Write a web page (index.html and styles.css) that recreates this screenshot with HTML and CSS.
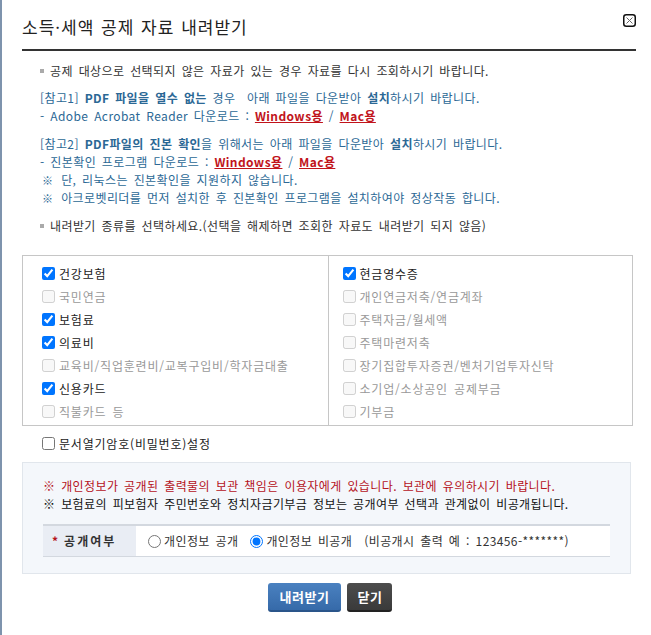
FILE: index.html
```html
<!DOCTYPE html>
<html lang="ko">
<head>
    <meta charset="UTF-8">
    <title>소득·세액 공제 자료 내려받기</title>
    <link rel="stylesheet" href="styles.css">
</head>
<body>
    <div class="popup">
        <div class="popup-header">
            <h1>소득·세액 공제 자료 내려받기</h1>
            <button type="button" class="close-btn" title="닫기">
                <svg width="13" height="13" viewBox="0 0 13 13">
                    <rect x="0.75" y="0.75" width="11.5" height="11.5" rx="2.5" fill="#fff" stroke="#111" stroke-width="1.5"/>
                    <path d="M3.5 3.5 L9.5 9.5 M9.5 3.5 L3.5 9.5" stroke="#666" stroke-width="1"/>
                </svg>
            </button>
        </div>

        <div class="guide">
            <p class="bullet"><span class="sq"></span>공제 대상으로 선택되지 않은 자료가 있는 경우 자료를 다시 조회하시기 바랍니다.</p>

            <div class="note">
                <p>[참고1] <b>PDF 파일을 열수 없는</b> 경우 &nbsp;아래 파일을 다운받아 <b>설치</b>하시기 바랍니다.</p>
                <p>- Adobe Acrobat Reader 다운로드 : <a href="#">Windows용</a> / <a href="#">Mac용</a></p>
            </div>

            <div class="note">
                <p>[참고2] <b>PDF파일의 진본 확인</b>을 위해서는 아래 파일을 다운받아 <b>설치</b>하시기 바랍니다.</p>
                <p>- 진본확인 프로그램 다운로드 : <a href="#">Windows용</a> / <a href="#">Mac용</a></p>
                <p><span class="mark">※</span> 단, 리눅스는 진본확인을 지원하지 않습니다.</p>
                <p><span class="mark">※</span> 아크로벳리더를 먼저 설치한 후 진본확인 프로그램을 설치하여야 정상작동 합니다.</p>
            </div>

            <p class="bullet"><span class="sq"></span>내려받기 종류를 선택하세요.(선택을 해제하면 조회한 자료도 내려받기 되지 않음)</p>
        </div>

        <div class="type-box">
            <div class="type-col">
                <label class="chk"><input type="checkbox" checked>건강보험</label>
                <label class="chk off"><input type="checkbox" disabled>국민연금</label>
                <label class="chk"><input type="checkbox" checked>보험료</label>
                <label class="chk"><input type="checkbox" checked>의료비</label>
                <label class="chk off"><input type="checkbox" disabled>교육비/직업훈련비/교복구입비/학자금대출</label>
                <label class="chk"><input type="checkbox" checked>신용카드</label>
                <label class="chk off"><input type="checkbox" disabled>직불카드 등</label>
            </div>
            <div class="type-col">
                <label class="chk"><input type="checkbox" checked>현금영수증</label>
                <label class="chk off"><input type="checkbox" disabled>개인연금저축/연금계좌</label>
                <label class="chk off"><input type="checkbox" disabled>주택자금/월세액</label>
                <label class="chk off"><input type="checkbox" disabled>주택마련저축</label>
                <label class="chk off"><input type="checkbox" disabled>장기집합투자증권/벤처기업투자신탁</label>
                <label class="chk off"><input type="checkbox" disabled>소기업/소상공인 공제부금</label>
                <label class="chk off"><input type="checkbox" disabled>기부금</label>
            </div>
        </div>

        <label class="chk pw"><input type="checkbox">문서열기암호(비밀번호)설정</label>

        <div class="privacy">
            <p class="warn">※ 개인정보가 공개된 출력물의 보관 책임은 이용자에게 있습니다. 보관에 유의하시기 바랍니다.</p>
            <p>※ 보험료의 피보험자 주민번호와 정치자금기부금 정보는 공개여부 선택과 관계없이 비공개됩니다.</p>
            <div class="privacy-row">
                <div class="privacy-label"><span class="req">*</span>공개여부</div>
                <div class="privacy-value">
                    <label class="rdo"><input type="radio" name="open">개인정보 공개</label>
                    <label class="rdo"><input type="radio" name="open" checked>개인정보 비공개</label>
                    <span class="example">(비공개시 출력 예 : 123456-*******)</span>
                </div>
            </div>
        </div>

        <div class="button-container">
            <button type="button" class="btn btn-blue">내려받기</button>
            <button type="button" class="btn btn-dark">닫기</button>
        </div>
    </div>
</body>
</html>
```

FILE: styles.css
```css
html, body {
    height: 100%;
}
body {
    margin: 0;
    background-color: #fff;
    border-left: 2px solid #7e93ad;
    box-sizing: border-box;
    font-family: 'Noto Sans CJK KR', 'DejaVu Sans', sans-serif;
    font-size: 12px;
    letter-spacing: 0.4px;
    word-spacing: 2px;
    color: #333;
}
p {
    margin: 0;
}
.popup {
    padding: 0 15px 0 20px;
}
.popup-header {
    display: flex;
    justify-content: space-between;
    align-items: center;
    height: 49px;
    border-bottom: 2px solid #333;
}
.popup-header h1 {
    margin: 0;
    font-size: 17px;
    font-weight: normal;
    color: #222;
    letter-spacing: 1px;
    word-spacing: 1px;
    padding-top: 3px;
}
.close-btn {
    border: none;
    background: none;
    padding: 0;
    align-self: flex-start;
    margin-top: 14px;
    display: flex;
}
.guide {
    padding: 11px 0 0 18px;
    line-height: 18px;
}
.bullet {
    color: #333;
    display: flex;
    align-items: center;
}
.sq {
    width: 4px;
    height: 4px;
    background-color: #aaa;
    margin-right: 6px;
}
.note {
    margin-top: 9px;
    color: #2b6895;
}
.note + .note {
    margin-top: 10px;
}
.note + .bullet {
    margin-top: 10px;
}
.note b {
    font-weight: bold;
}
.note a {
    color: #c1141b;
    font-weight: bold;
    text-decoration: underline;
}
.mark {
    font-size: 11px;
    margin: 0 2px 0 2px;
}
.type-box {
    display: grid;
    grid-template-columns: 1fr 1fr;
    border: 1px solid #c6c6c6;
    margin: 20px 3px 0 0;
}
.type-col {
    display: flex;
    flex-direction: column;
    padding: 6px 0 2px 19px;
}
.type-col + .type-col {
    border-left: 1px solid #c6c6c6;
    padding-left: 14px;
}
.chk {
    display: flex;
    align-items: center;
    height: 23px;
    color: #222;
    letter-spacing: 0.8px;
}
.chk input {
    margin: 0 4px 0 0;
    width: 13px;
    height: 13px;
}
.chk.off {
    color: #999;
}
.pw {
    margin: 6px 0 0 20px;
}
.privacy {
    margin: 7px 5px 0 0;
    background-color: #f4f7fb;
    border: 1px solid #e1e6ec;
    padding: 14px 20px 16px;
    line-height: 18px;
    color: #111;
}
.warn {
    color: #b5121b;
}
.privacy-row {
    display: flex;
    margin-top: 11px;
    border-top: 2px solid #d3d8df;
    border-bottom: 1px solid #d3d8df;
    height: 30px;
    background-color: #fff;
}
.privacy-label {
    width: 93px;
    background-color: #e9edf4;
    font-weight: bold;
    display: flex;
    align-items: center;
    padding-left: 9px;
    box-sizing: border-box;
    color: #333;
    letter-spacing: 2px;
}
.req {
    color: #b5121b;
    margin-right: 4px;
}
.privacy-value {
    display: flex;
    align-items: center;
    padding-left: 12px;
    gap: 12px;
    color: #333;
}
.rdo {
    display: flex;
    align-items: center;
}
.rdo input {
    margin: 0 3px 0 0;
    width: 13px;
    height: 13px;
}
.button-container {
    display: flex;
    justify-content: center;
    gap: 6px;
    margin-top: 9px;
    padding-left: 2px;
}
.btn {
    height: 29px;
    border: none;
    border-radius: 3px;
    color: #fff;
    font-family: inherit;
    font-size: 13px;
    font-weight: bold;
    letter-spacing: 0.5px;
    padding: 0 12px;
    cursor: pointer;
}
.btn-blue {
    background: linear-gradient(#4a81c0, #366aa9);
    border-bottom: 2px solid #2a558a;
}
.btn-dark {
    padding: 0 10px;
    background: linear-gradient(#4d4d4d, #3a3a3a);
    border-bottom: 2px solid #222;
}
```
